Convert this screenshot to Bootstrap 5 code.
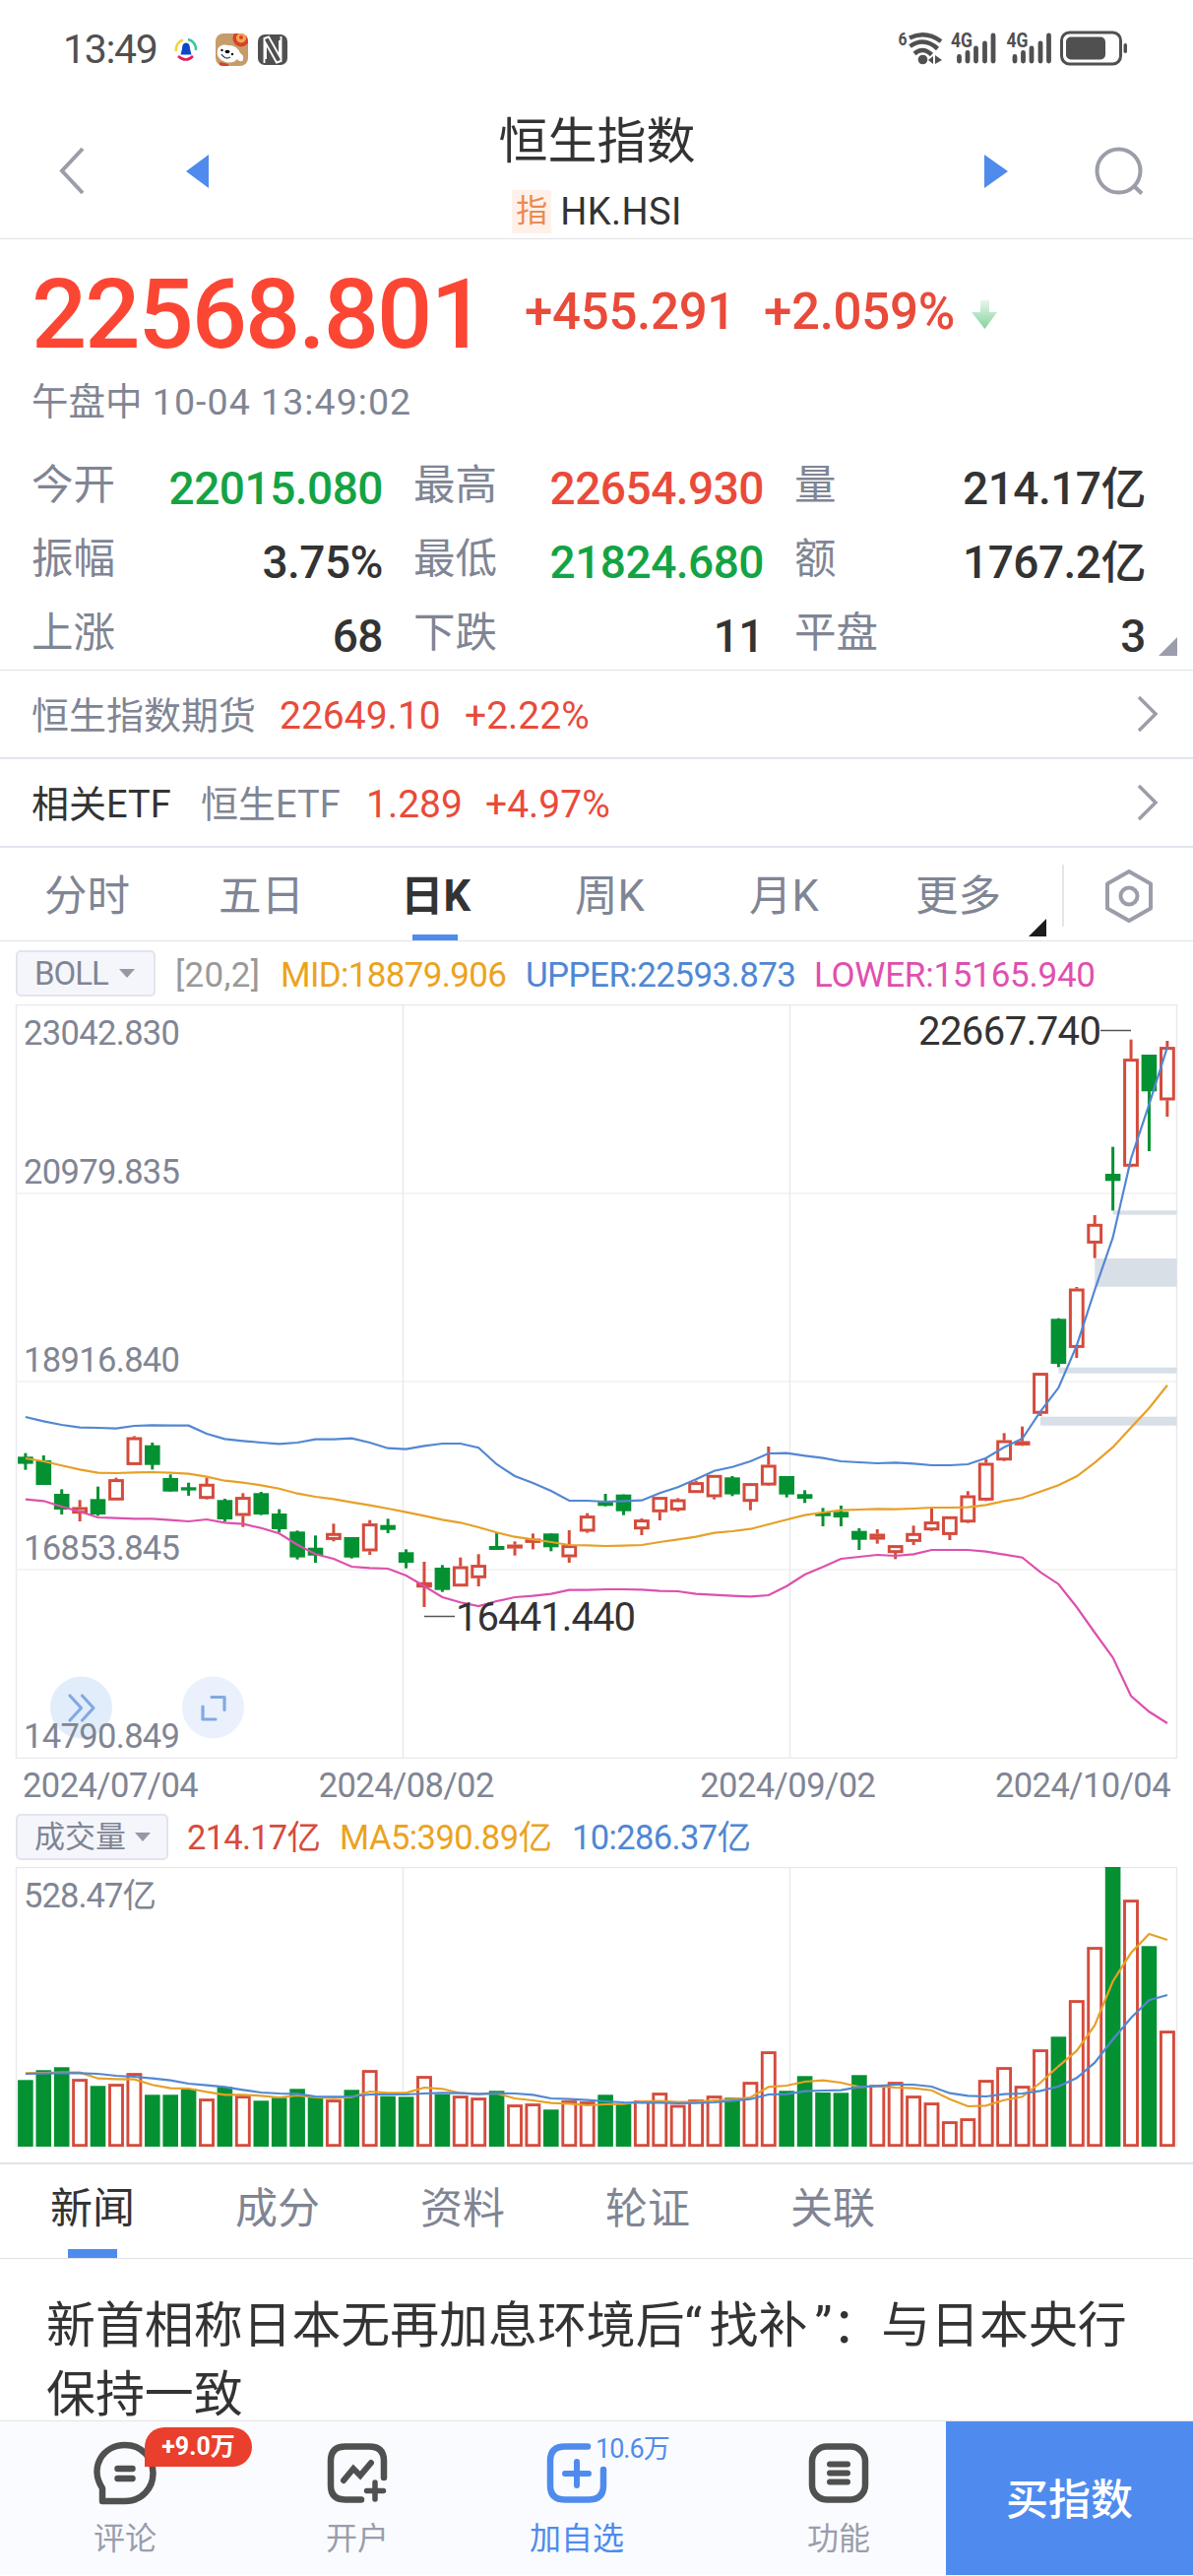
<!DOCTYPE html>
<html lang="zh-CN">
<head>
<meta charset="utf-8">
<meta name="viewport" content="width=device-width, initial-scale=1">
<title>恒生指数 HK.HSI</title>
<link href="https://cdn.jsdelivr.net/npm/bootstrap@5.3.0/dist/css/bootstrap.min.css" rel="stylesheet">
<style>
:root{--ink:#333;--muted-ink:#808594;--up:#e94a3a;--down:#14a344;--blue:#4f8bed;--line:#e2e2e6}
body{font-family:Roboto,"Noto Sans CJK SC",sans-serif;color:var(--ink);background:#fff;line-height:1}
.phone{width:1212px;height:2616px;overflow:hidden}
svg{display:block;flex:none}
svg text{font-family:Roboto,"Noto Sans CJK SC",sans-serif}
.c-muted{color:var(--muted-ink)}.c-up{color:var(--up)}.c-down{color:var(--down)}.c-blue{color:var(--blue)}
.status{height:100px;padding:0 66px 0 64px}
.clock{font-size:41px;color:#505050;font-weight:400;width:113px;letter-spacing:-1.3px}
.titlebar{height:143px;border-bottom:1px solid var(--line);padding:4px 50px 0 59px}
.idx-name{font-size:50px;height:72px;line-height:72px;margin-top:4px}
.idx-tag{width:40px;height:44px;line-height:42px;font-size:32px;background:#fff1e9;color:#ea8b52;text-align:center}
.idx-code{font-size:38px;line-height:44px;letter-spacing:.4px}
.quote{height:438px;border-bottom:1px solid var(--line);padding:0 32px}
.price{font-size:99px;font-weight:500;color:#fc4634;letter-spacing:-2px;line-height:99px;width:501px}
.chg{font-size:51px;font-weight:500;letter-spacing:-.3px;line-height:60px}
.stamp{font-size:37.5px;line-height:44px}
.stamp span{letter-spacing:1.05px}
.stats{display:grid;grid-template-columns:356px 355px 356px;column-gap:32px}
.stats>div{height:75px;line-height:60px}
.stats .lbl{font-size:42.5px;color:var(--muted-ink);position:relative;top:-4px}
.stats .val{font-size:46px;font-weight:500;letter-spacing:-.5px;position:relative;top:-1px;left:1px}
.linkrow{height:90px;border-bottom:2px solid #e3e4ed;padding:4px 35px 0 32px;font-size:38px}
.linkrow .num{font-size:39px}
.ktabs{height:95px;border-bottom:1px solid var(--line)}
.ktab{width:177px;font-size:43.5px;color:var(--muted-ink);position:relative;height:95px;line-height:99px;text-align:center}
.ktab.on{color:var(--ink);font-weight:700}
.ktab.on::after{content:"";position:absolute;left:65px;bottom:1px;width:46px;height:6px;background:var(--blue)}
.legend-row{height:64px;padding-left:16px}
.chip{height:47px;border:2px solid #e2e4ee;border-radius:5px;background:#f5f6fc;color:var(--muted-ink);font-size:33px;padding:0 17px;white-space:nowrap;flex:none}
.chip i{border:8px solid transparent;border-top:9px solid #9599a6;border-bottom:0;margin-left:11px}
.dates{height:48px;padding:6px 23px 0 23px;font-size:34.5px;color:var(--muted-ink);letter-spacing:-.55px}
.ntabs{height:98px;border-bottom:1px solid var(--line);border-top:2px solid #e2e3ea}
.ntab{width:188px;font-size:43px;height:95px;line-height:91px;text-align:center;color:var(--muted-ink);position:relative}
.ntab.on{color:var(--ink)}
.ntab.on::after{content:"";position:absolute;left:69px;bottom:0;width:50px;height:9px;background:var(--blue)}
.headline{height:164px;padding:33px 47px 0;font-size:49.9px;line-height:70px;overflow:hidden;white-space:nowrap;margin:0;font-weight:400}
.qm{display:inline-block;width:25px}
.bottombar{height:157px;background:#fafbff;border-top:1px solid #e2e3e8}
.act{font-size:32px;color:#9a9dab;position:relative;padding-top:19px}
.act span{line-height:34px}
.act.on{color:var(--blue)}
.badge-hot{position:absolute;left:147px;top:6px;width:109px;height:40px;border-radius:20px 20px 20px 0;background:#e93f2c;color:#fff;font-size:25px;font-weight:700;line-height:40px;text-align:center}
.cnt{position:absolute;left:133px;top:14px;font-size:27px;letter-spacing:-1px;color:var(--blue);line-height:28px}
.buy{width:251px;background:#4f8bef;color:#fff;font-size:43px;font-weight:500;padding-top:4px}
</style>
<script src="https://cdn.jsdelivr.net/npm/bootstrap@5.3.0/dist/js/bootstrap.bundle.min.js"></script>
</head>
<body>
<div class="phone d-flex flex-column">

  <div class="status d-flex align-items-center justify-content-between">
    <div class="d-flex align-items-center">
      <span class="clock">13:49</span>
      <svg width="24" height="26" viewBox="0 0 24 26" fill="none" stroke-width="2.6">
        <path d="M2 15A10 10 0 0 1 9 3.500" stroke="#f0d43a"/><path d="M14 3A10 10 0 0 1 22 14" stroke="#35c6a0"/><path d="M4 20Q12 27 19 20" stroke="#e01f58"/>
        <path d="M12 6.500q4 0 4 6l1.500 6h-11l1.500-6q0-6 4-6z" fill="#0d47c9"/>
      </svg>
      <svg style="margin-left:18px" width="33" height="33" viewBox="0 0 33 33">
        <clipPath id="pet"><rect width="33" height="33" rx="8"/></clipPath>
        <g clip-path="url(#pet)"><rect width="33" height="33" fill="#c79c6b"/><circle cx="26" cy="5" r="8.500" fill="#d9412a"/><circle cx="26" cy="4.500" r="5" fill="#f0a94e"/><circle cx="26" cy="4" r="2" fill="#d9412a"/>
        <path d="M2 16q3-6 11-4q9 0 12 8q4 2 3 7q-3 3-6-1q-4 5-12 3q-10-3-8-13z" fill="#fff"/><circle cx="6.500" cy="17" r="1.200"/><ellipse cx="12" cy="18.500" rx="2.400" ry="1.800"/><circle cx="17" cy="21" r="1.200"/><path d="M6 21q4 6 9 3" fill="none" stroke="#333" stroke-width="1.200"/><path d="M4 29l9 2v2H4z" fill="#d9412a"/></g>
      </svg>
      <svg style="margin-left:10px" width="30" height="31" viewBox="0 0 30 31"><rect width="30" height="31" rx="7" fill="#505050"/><path d="M6.500 29V4L11 2.500L22 22V6M23.500 2v25L19 28.500L8 9V25" fill="none" stroke="#fff" stroke-width="1.900"/></svg>
    </div>
    <svg width="234" height="60" viewBox="912 20 234 60" fill="#505050">
      <text x="912.5" y="46" font-size="19" font-weight="700" textLength="9" lengthAdjust="spacingAndGlyphs">6</text>
      <g fill="none" stroke="#505050" stroke-width="4.500"><path d="M924 38.500Q940.500 30.500 956 42"/><path d="M924.500 47Q939 37 952.500 49.500"/><path d="M929 54.500Q937.500 47 946.500 55.500"/></g>
      <circle cx="937.500" cy="60.500" r="4.800"/><path d="M943 61l5-4v8zM950 56l7 5-7 4z"/>
      <g id="cell"><text x="966" y="47.500" font-size="20" font-weight="700" textLength="22" lengthAdjust="spacingAndGlyphs">4G</text>
      <g stroke="#505050" stroke-width="4.800" stroke-linecap="round"><path d="M974.500 57.500V62M983 53.500V62M991.500 49V62M1000.500 44V62M1009 36V62"/></g></g>
      <use href="#cell" x="56.500"/>
      <rect x="1078.500" y="33" width="60" height="32" rx="8" fill="none" stroke="#505050" stroke-width="3"/><rect x="1083" y="37.500" width="40" height="23" rx="5"/><rect x="1141.500" y="44" width="3.500" height="10" rx="1.700"/>
    </svg>
  </div>

  <header class="titlebar d-flex justify-content-between">
    <div class="d-flex pt-1">
      <svg width="28" height="132" viewBox="0 0 28 132"><path d="M25 43L4 65.500L25 88" fill="none" stroke="#9b9ea9" stroke-width="4"/></svg>
      <svg style="margin-left:102px" width="24" height="132" viewBox="0 0 24 132"><path d="M23 49v34L0 66z" fill="#4f8bed"/></svg>
    </div>
    <div class="d-flex flex-column align-items-center">
      <div class="idx-name">恒生指数</div>
      <div class="d-flex" style="margin-top:13px"><span class="idx-tag">指</span><span class="idx-code" style="margin-left:9px">HK.HSI</span></div>
    </div>
    <div class="d-flex pt-1">
      <svg width="24" height="132" viewBox="0 0 24 132"><path d="M0 49v34L24 66z" fill="#4f8bed"/></svg>
      <svg style="margin-left:88px" width="50" height="132" viewBox="0 0 50 132" fill="none" stroke="#9b9ea9" stroke-width="4"><circle cx="24.500" cy="65.500" r="22"/><path d="M39.500 80.500L48 88.500"/></svg>
    </div>
  </header>

  <section class="quote">
    <div class="d-flex" style="padding-top:27px">
      <span class="price">22568.801</span>
      <span class="chg c-up" style="padding-top:17px;width:243px">+455.291</span>
      <span class="chg c-up" style="padding-top:17px;width:210px">+2.059%</span>
      <svg width="30" height="64" viewBox="0 -2 30 64"><defs><linearGradient id="fall" x1="0" y1="0" x2="0" y2="1"><stop offset="0" stop-color="#e6f7eb"/><stop offset="1" stop-color="#84d39c"/></linearGradient></defs><path d="M10 33h9v12h8L14.500 62L1 45h9z" fill="url(#fall)"/></svg>
    </div>
    <div class="stamp c-muted" style="margin-top:17px">午盘中<span> 10-04 13:49:02</span></div>
    <div class="stats" style="margin-top:37px">
      <div class="d-flex justify-content-between"><span class="lbl">今开</span><span class="val c-down">22015.080</span></div>
      <div class="d-flex justify-content-between"><span class="lbl">最高</span><span class="val c-up">22654.930</span></div>
      <div class="d-flex justify-content-between"><span class="lbl">量</span><span class="val">214.17亿</span></div>
      <div class="d-flex justify-content-between"><span class="lbl">振幅</span><span class="val">3.75%</span></div>
      <div class="d-flex justify-content-between"><span class="lbl">最低</span><span class="val c-down">21824.680</span></div>
      <div class="d-flex justify-content-between"><span class="lbl">额</span><span class="val">1767.2亿</span></div>
      <div class="d-flex justify-content-between"><span class="lbl">上涨</span><span class="val">68</span></div>
      <div class="d-flex justify-content-between"><span class="lbl">下跌</span><span class="val">11</span></div>
      <div class="d-flex justify-content-between position-relative"><span class="lbl">平盘</span><span class="val">3</span>
        <svg class="position-absolute" style="right:-33px;top:30px" width="19" height="19"><path d="M19 0v19H0z" fill="#9a9dab"/></svg></div>
    </div>
  </section>

  <div class="linkrow d-flex align-items-center">
    <span class="c-muted" style="width:252px">恒生指数期货</span><span class="num c-up" style="width:188px">22649.10</span><span class="num c-up">+2.22%</span>
    <svg class="ms-auto" width="22" height="42" viewBox="0 0 22 42"><path d="M2 2L19 19L2 36" fill="none" stroke="#9b9ea9" stroke-width="3.500"/></svg>
  </div>
  <div class="linkrow d-flex align-items-center">
    <span style="width:172px">相关ETF</span><span class="c-muted" style="width:168px">恒生ETF</span><span class="num c-up" style="width:121px">1.289</span><span class="num c-up">+4.97%</span>
    <svg class="ms-auto" width="22" height="42" viewBox="0 0 22 42"><path d="M2 2L19 19L2 36" fill="none" stroke="#9b9ea9" stroke-width="3.500"/></svg>
  </div>

  <nav class="ktabs d-flex">
    <div class="ktab">分时</div><div class="ktab">五日</div><div class="ktab on">日K</div><div class="ktab">周K</div><div class="ktab">月K</div>
    <div class="ktab">更多<svg class="position-absolute" style="left:160px;top:72px" width="18" height="18"><path d="M18 0v18H0z" fill="#1c1c1c"/></svg></div>
    <div style="width:19px;height:63px;margin-top:17px;border-right:2px solid #e6e6ea"></div>
    <svg style="margin:22px 0 0 41px" width="50" height="54" viewBox="0 0 50 54" fill="none" stroke="#9b9ea9" stroke-width="4" stroke-linejoin="round"><path d="M25 2L47 14.500V39.500L25 52L3 39.500V14.500z"/><circle cx="25" cy="27" r="8.500"/></svg>
  </nav>

  <div class="legend-row d-flex align-items-center">
    <span class="chip d-flex align-items-center" style="width:142px"><b class="fw-normal" style="letter-spacing:-1px">BOLL</b><i></i></span>
    <svg width="960" height="50" font-size="35">
      <text x="20" y="38.500" fill="#999" textLength="86">[20,2]</text>
      <text x="127" y="38.500" fill="#eba31f" textLength="230">MID:18879.906</text>
      <text x="376" y="38.500" fill="#5087d3" textLength="275">UPPER:22593.873</text>
      <text x="669" y="38.500" fill="#e04fb0" textLength="286">LOWER:15165.940</text>
    </svg>
  </div>

  <svg id="kline" width="1212" height="766" viewBox="0 0 1212 766"></svg>

  <div class="dates d-flex align-items-center">
    <span style="width:301px">2024/07/04</span><span style="width:388px">2024/08/02</span><span style="width:300px">2024/09/02</span><span>2024/10/04</span>
  </div>

  <div class="legend-row d-flex align-items-center" style="height:62px">
    <span class="chip d-flex align-items-center" style="width:155px;font-size:31px">成交量<i style="margin-left:9px"></i></span>
    <svg width="900" height="50" font-size="34.500">
      <text x="19" y="37.500" fill="#d64b3b" textLength="136">214.17亿</text>
      <text x="174" y="37.500" fill="#eba31f" textLength="216">MA5:390.89亿</text>
      <text x="410" y="37.500" fill="#5087d3" textLength="182">10:286.37亿</text>
    </svg>
  </div>

  <svg id="volume" width="1212" height="300" viewBox="0 0 1212 300"></svg>

  <nav class="ntabs d-flex">
    <div class="ntab on">新闻</div><div class="ntab">成分</div><div class="ntab">资料</div><div class="ntab">轮证</div><div class="ntab">关联</div>
  </nav>

  <h2 class="headline">新首相称日本无再加息环境后<span class="qm">“</span>找补<span class="qm text-end">”</span>：与日本央行<br>保持一致</h2>

  <footer class="bottombar d-flex">
    <div class="act d-flex flex-column align-items-center" style="width:254px">
      <svg width="68" height="68" viewBox="0 0 68 68" fill="none" stroke="#505050" stroke-width="6.500"><path d="M11 62V49C-3 27 12 5 34 5C51 5 62.500 18 62.500 33.500C62.500 49 51 62 34 62z" stroke-linejoin="round"/><path d="M26.500 29h15M26.500 39h15" stroke-linecap="round"/></svg>
      <span style="margin-top:15px">评论</span>
      <div class="badge-hot">+9.0万</div>
    </div>
    <div class="act d-flex flex-column align-items-center" style="width:218px">
      <svg width="68" height="68" viewBox="0 0 68 68" fill="none" stroke="#505050" stroke-width="6.500" stroke-linecap="round"><path d="M38 60.500H22Q7 60.500 7 46V21Q7 6.500 22 6.500H46Q61 6.500 61 21V38"/><path d="M20 41L30 29L37 36L48 23" stroke-width="6"/><path d="M52 43V60M43.500 51.500H60.500" stroke-width="5.500"/></svg>
      <span style="margin-top:15px">开户</span>
    </div>
    <div class="act on d-flex flex-column align-items-center" style="width:228px">
      <svg width="68" height="68" viewBox="0 0 68 68" fill="none" stroke="#4f8bed" stroke-width="6.500" stroke-linecap="round"><path d="M45 6.500H22Q7 6.500 7 21V46Q7 60.500 22 60.500H46Q61 60.500 61 46V30"/><path d="M34 22V46M22 34H46" stroke-width="6"/></svg>
      <span style="margin-top:15px">加自选</span>
      <div class="cnt">10.6万</div>
    </div>
    <div class="act flex-fill d-flex flex-column align-items-center" style="padding-left:43px">
      <svg width="68" height="68" viewBox="0 0 68 68" fill="none" stroke="#505050" stroke-width="6.500" stroke-linecap="round"><rect x="7" y="6.500" width="54" height="54" rx="15"/><path d="M25 24.500H43M25 33.500H43M25 42.500H43" stroke-width="6"/></svg>
      <span style="margin-top:15px">功能</span>
    </div>
    <div class="buy d-flex align-items-center justify-content-center">买指数</div>
  </footer>
</div>

<script>
const RED='#d44b3c', GREEN='#049132', BLUE='#5287d2', GOLD='#e7a027', PINK='#dd50ae', GRID='#e9e9ee', MUTED='#808594';
const X = i => 25.9 + i * 18.412;
const f = n => n.toFixed(1);
// direction, high, body top, body bottom, low (a third of a pixel each, measured from y=360)
const candles = `g 287 298 320 338|g 294 309 384 384|g 397 411 459 474|r 430 452 471 495|g 389 427 474 478|r 362 367 431 431|r 235 239 323 323|g 255 263 323 337|g 352 363 404 404|g 377 391 401 417|r 362 381 426 428|g 426 430 489 496|r 409 421 478 512|g 405 409 474 476|g 458 471 519 528|g 523 526 605 611|g 538 575 599 621|r 502 531 551 556|g 543 543 605 608|r 491 502 586 597|g 487 506 521 531|g 580 589 621 638|r 618 681 696 756|g 628 636 704 710|r 605 632 693 693|r 595 628 668 693|g 530 570 582 582|r 556 566 577 599|r 532 548 560 580|g 532 532 574 586|r 522 568 604 621|r 470 478 526 530|g 411 436 448 449|g 413 413 464 476|r 486 490 519 537|r 421 421 467 492|r 424 428 461 465|r 371 376 408 408|r 354 354 421 428|g 357 361 413 418|r 379 379 435 461|r 267 323 385 387|g 357 357 413 422|g 400 412 426 439|g 454 468 479 510|g 447 466 483 510|g 516 524 551 582|r 519 533 550 563|r 567 568 591 610|r 508 531 557 567|r 455 496 522 524|r 480 480 536 552|r 403 416 498 500|r 304 317 431 433|r 226 248 309 311|r 206 251 263 265|r 42 43 167 174|g -124 -122 15 25|r -219 -214 -34 -3|r -438 -411 -352 -307|g -646 -564 -542 -452|r -973 -914 -586 -584|g -927 -927 -815 -633|r -969 -950 -788 -738`.split('|').map(s=>s.split(' '));
const upper=[177,190,201,209,210,212,204,202,203,203,228,244,250,255,259,255,245,245,242,255,272,275,265,258,258,271,321,357,378,402,432,432,435,433,431,409,391,367,341,329,312,288,287,295,302,312,315,318,316,319,324,324,321,302,269,243,160,88,-40,-210,-370,-610,-775,-950];
const mid=[303,312,325,337,347,348,346,345,347,350,359,371,377,385,395,410,420,427,437,446,456,467,478,490,499,513,529,542,550,558,567,568,570,569,567,558,550,542,530,525,518,504,490,476,468,461,459,457,458,456,453,453,452,445,433,424,404,385,358,316,269,209,150,80];
const lower=[428,433,450,465,483,485,487,487,491,495,489,499,503,515,532,566,595,609,633,637,639,660,692,726,742,753,738,726,722,716,704,704,702,702,703,707,708,716,719,722,724,720,692,657,634,609,603,597,600,595,582,582,582,587,596,605,650,686,756,834,910,1027,1075,1110];
const line=(a,Y,c)=>`<polyline points="${a.map((v,i)=>f(X(i))+','+f(Y(v))).join(' ')}" fill="none" stroke="${c}" stroke-width="2.200"/>`;
const seg=(x1,y1,x2,y2,c=GRID,w=1.5)=>`<line x1="${x1}" y1="${y1}" x2="${x2}" y2="${y2}" stroke="${c}" stroke-width="${w}"/>`;
const label=(x,y,w,t,c=MUTED,s=34.5)=>`<text x="${x}" y="${y}" font-size="${s}" fill="${c}" textLength="${w}">${t}</text>`;

const Y=v=>360+v/3;
let k=`<rect x="16.500" y=".5" width="1179" height="765" fill="none" stroke="${GRID}" stroke-width="1.500"/>`;
k+=[192,383,574].map(y=>seg(16,y,1195,y,'#f0f0f3')).join('')+seg(409.5,0,409.5,765)+seg(802.5,0,802.5,765);
k+=[[60,-452,-439],[59,-306,-220],[57,26,44],[56,176,203]].map(([i,a,b])=>`<rect x="${f(X(i))}" y="${f(Y(a))}" width="${f(1195.5-X(i))}" height="${f((b-a)/3)}" fill="#d8dfe7"/>`).join('');
candles.forEach((c,i)=>{
  const [h,t,b,l]=c.slice(1).map(v=>Y(+v)), x=X(i);
  if(c[0]==='g') k+=seg(x,h,x,l,GREEN,3)+`<rect x="${f(x-7.8)}" y="${f(t)}" width="15.600" height="${f(b-t)}" fill="${GREEN}"/>`;
  else k+=seg(x,h,x,t,RED,3)+seg(x,b,x,l,RED,3)+`<rect x="${f(x-6.4)}" y="${f(t+1.3)}" width="12.800" height="${f(Math.max(b-t-2.6,1))}" fill="none" stroke="${RED}" stroke-width="3"/>`;
});
k+=line(upper,Y,BLUE)+line(mid,Y,GOLD)+line(lower,Y,PINK);
k+=`<circle cx="82.500" cy="714" r="31.500" fill="#e2edfb"/><circle cx="216.500" cy="714" r="31.500" fill="#eaf1fc"/>
<g fill="none" stroke="#82a9e2" stroke-width="3.200" stroke-linecap="round" stroke-linejoin="round"><path d="M71 702L82.500 714.500L71 727M83.500 702L95 714.500L83.500 727"/><path d="M215 703.500H228V716.500M206 713V726H219"/></g>`;
k+=[['23042.830',41],['20979.835',182],['18916.840',373],['16853.845',564],['14790.849',755]].map(([t,y])=>label(24,y,159,t)).join('');
k+=label(933,41,186,'22667.740','#333',40)+seg(1118,26.5,1149,26.5,'#555',1.5)+label(463,636,183,'16441.440','#333',40)+seg(431,621.5,462,621.5,'#555',1.5);
document.getElementById('kline').innerHTML=k;

const bars='g697 g667 g658 r694 g715 r709 r676 g742 g742 g724 r754 g718 r745 g760 g751 g724 g750 r757 g727 r667 g746 g748 r685 g741 r745 r751 g730 r772 r769 g787 r760 r763 g742 g769 r760 r736 r773 r757 r745 g751 r703 r610 g730 g685 g735 g736 g682 r712 r703 r745 r766 r823 r814 r697 r658 r715 r604 g565 r454 r292 g48 r148 g289 r547'.split(' ');
const ma5=[676,675,674,674,692,694,695,712,722,723,733,742,742,745,750,744,750,752,749,732,736,736,720,724,737,739,738,753,759,767,769,774,771,770,762,761,764,763,759,756,750,718,714,702,698,705,718,716,720,722,728,755,777,775,758,748,705,655,608,530,396,310,252,270];
const ma10=[678,677,676,676,678,684,687,692,698,708,713,718,727,735,738,739,747,748,747,741,741,741,738,736,737,740,737,738,742,753,755,758,762,765,766,766,768,767,765,760,755,741,740,731,729,728,718,715,711,711,717,737,745,747,740,738,730,716,691,644,573,508,454,438];
const V=v=>v/3-16;
let m=`<path d="M16.500 284V.5H1195.500V284" fill="none" stroke="${GRID}" stroke-width="1.500"/>`+seg(409.5,0,409.5,284)+seg(802.5,0,802.5,284);
bars.forEach((s,i)=>{
  const t=V(+s.slice(1)), x=X(i);
  m+= s[0]==='g' ? `<rect x="${f(x-7.8)}" y="${f(t)}" width="15.600" height="${f(284-t)}" fill="${GREEN}"/>`
    : `<rect x="${f(x-6.5)}" y="${f(t+1.3)}" width="13" height="${f(284-t-2.6)}" fill="#fff" stroke="${RED}" stroke-width="2.900"/>`;
});
m+=line(ma5,V,GOLD)+line(ma10,V,BLUE)+label(24,41,135,'528.47亿');
document.getElementById('volume').innerHTML=m;
</script>
</body>
</html>
